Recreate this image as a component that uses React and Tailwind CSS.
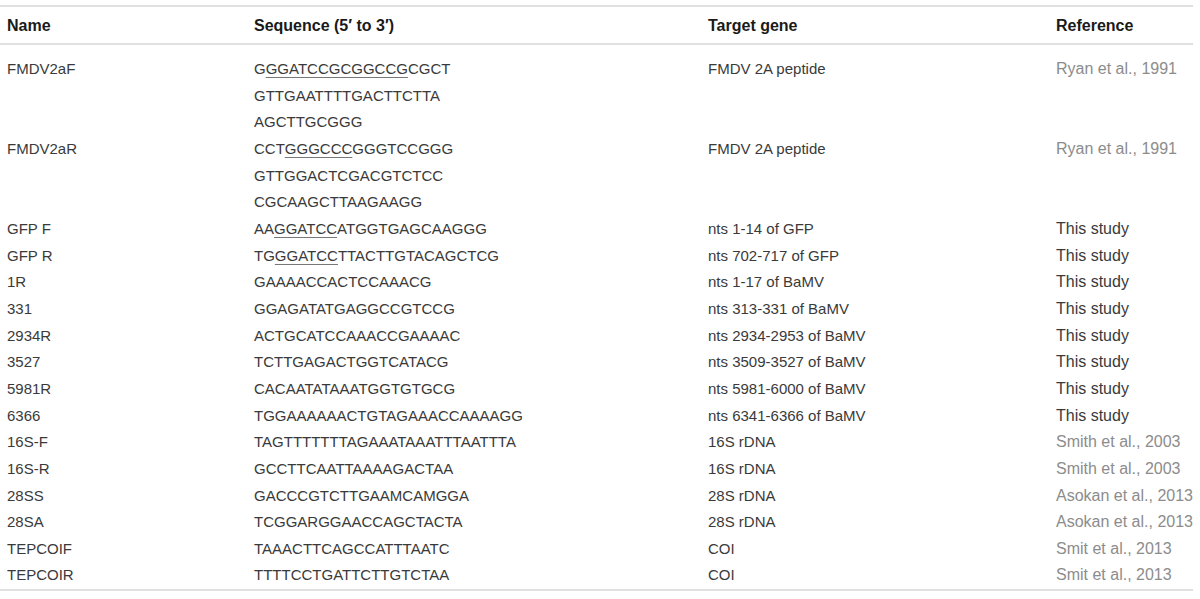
import React from "react";

const rows = [
    { name: "FMDV2aF", seq: [[["G", false], ["GGATCCGCGGCCG", true], ["CGCT", false]], "GTTGAATTTTGACTTCTTA", "AGCTTGCGGG"], gene: "FMDV 2A peptide", ref: "Ryan et al., 1991", grey: true },
    { name: "FMDV2aR", seq: [[["CCT", false], ["GGGCCC", true], ["GGGTCCGGG", false]], "GTTGGACTCGACGTCTCC", "CGCAAGCTTAAGAAGG"], gene: "FMDV 2A peptide", ref: "Ryan et al., 1991", grey: true },
    { name: "GFP F", seq: [[["AA", false], ["GGATCC", true], ["ATGGTGAGCAAGGG", false]]], gene: "nts 1-14 of GFP", ref: "This study" },
    { name: "GFP R", seq: [[["TG", false], ["GGATCC", true], ["TTACTTGTACAGCTCG", false]]], gene: "nts 702-717 of GFP", ref: "This study" },
    { name: "1R", seq: ["GAAAACCACTCCAAACG"], gene: "nts 1-17 of BaMV", ref: "This study" },
    { name: "331", seq: ["GGAGATATGAGGCCGTCCG"], gene: "nts 313-331 of BaMV", ref: "This study" },
    { name: "2934R", seq: ["ACTGCATCCAAACCGAAAAC"], gene: "nts 2934-2953 of BaMV", ref: "This study" },
    { name: "3527", seq: ["TCTTGAGACTGGTCATACG"], gene: "nts 3509-3527 of BaMV", ref: "This study" },
    { name: "5981R", seq: ["CACAATATAAATGGTGTGCG"], gene: "nts 5981-6000 of BaMV", ref: "This study" },
    { name: "6366", seq: ["TGGAAAAAACTGTAGAAACCAAAAGG"], gene: "nts 6341-6366 of BaMV", ref: "This study" },
    { name: "16S-F", seq: ["TAGTTTTTTTAGAAATAAATTTAATTTA"], gene: "16S rDNA", ref: "Smith et al., 2003", grey: true },
    { name: "16S-R", seq: ["GCCTTCAATTAAAAGACTAA"], gene: "16S rDNA", ref: "Smith et al., 2003", grey: true },
    { name: "28SS", seq: ["GACCCGTCTTGAAMCAMGGA"], gene: "28S rDNA", ref: "Asokan et al., 2013", grey: true },
    { name: "28SA", seq: ["TCGGARGGAACCAGCTACTA"], gene: "28S rDNA", ref: "Asokan et al., 2013", grey: true },
    { name: "TEPCOIF", seq: ["TAAACTTCAGCCATTTAATC"], gene: "COI", ref: "Smit et al., 2013", grey: true },
    { name: "TEPCOIR", seq: ["TTTTCCTGATTCTTGTCTAA"], gene: "COI", ref: "Smit et al., 2013", grey: true },
];

const SeqLine = ({ line }) => {
    if (typeof line === "string") return <div className="h-[26.67px] leading-[26.67px]">{line}</div>;
    return (
        <div className="h-[26.67px] leading-[26.67px]">
            {line.map(([txt, u], i) =>
                u ? (
                    <span key={i} className="underline decoration-[#777] underline-offset-[3px]">{txt}</span>
                ) : (
                    <span key={i}>{txt}</span>
                )
            )}
        </div>
    );
};

const App = () => {
    return (
        <div className="w-[1200px] h-[599px] bg-white pt-[5px] font-['Liberation_Sans',Arial,sans-serif] text-[15px] text-[#3a3a3a]">
            <div className="w-[1193px] border-t-2 border-b-2 border-[#e0e0e0]">
                {/* header */}
                <div className="flex items-center h-[38px] border-b-2 border-[#e0e0e0] font-bold text-[16px] text-[#1a1a1a] pt-[2px]">
                    <div className="w-[254px] pl-[7px]">Name</div>
                    <div className="w-[454px]">Sequence (5′ to 3′)</div>
                    <div className="w-[348px]">Target gene</div>
                    <div className="flex-1">Reference</div>
                </div>
                <div className="pt-[11px] pb-0">
                    {rows.map((r) => (
                        <div key={r.name} className="flex">
                            <div className="w-[254px] pl-[7px] h-[26.67px] leading-[26.67px]">{r.name}</div>
                            <div className="w-[454px]">
                                {r.seq.map((l, i) => (
                                    <SeqLine key={i} line={l} />
                                ))}
                            </div>
                            <div className="w-[348px] h-[26.67px] leading-[26.67px]">{r.gene}</div>
                            <div className={`flex-1 h-[26.67px] leading-[26.67px] text-[16px] whitespace-nowrap ${r.grey ? "text-[#8c8c8c]" : ""}`}>{r.ref}</div>
                        </div>
                    ))}
                </div>
            </div>
        </div>
    );
};

export default App;
